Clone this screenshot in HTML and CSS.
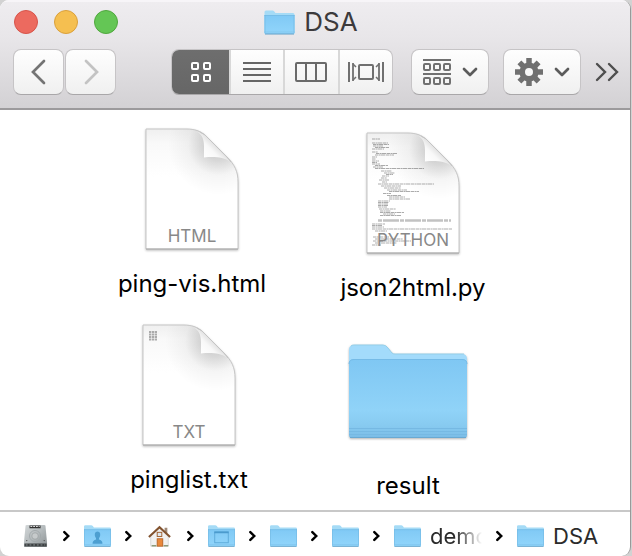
FILE: index.html
```html
<!DOCTYPE html>
<html lang="en">
<head>
<meta charset="utf-8">
<title>DSA</title>
<link rel="stylesheet" href="styles.css">
</head>
<body>
<svg class="defs" aria-hidden="true">
  <defs>
    <linearGradient id="g-front" x1="0" y1="0" x2="0" y2="1">
      <stop offset="0" stop-color="#7fc7f3"/><stop offset=".65" stop-color="#90d3f8"/><stop offset=".85" stop-color="#87caf0"/><stop offset="1" stop-color="#7abce6"/>
    </linearGradient>
    <linearGradient id="g-small" x1="0" y1="0" x2="0" y2="1">
      <stop offset="0" stop-color="#80c9f5"/><stop offset="1" stop-color="#91d5fb"/>
    </linearGradient>
    <linearGradient id="g-page" x1="0" y1="0" x2="0" y2="1">
      <stop offset="0" stop-color="#efefef"/><stop offset=".12" stop-color="#f9f9f9"/><stop offset=".4" stop-color="#fff"/>
    </linearGradient>
    <radialGradient id="g-curl" gradientUnits="userSpaceOnUse" cx="72" cy="16" r="50">
      <stop offset="0" stop-color="#000" stop-opacity=".22"/><stop offset=".3" stop-color="#000" stop-opacity=".15"/><stop offset=".6" stop-color="#000" stop-opacity=".04"/><stop offset="1" stop-color="#000" stop-opacity="0"/>
    </radialGradient>
    <linearGradient id="g-flap" gradientUnits="userSpaceOnUse" x1="59" y1="30" x2="72" y2="17">
      <stop offset="0" stop-color="#fff"/><stop offset=".6" stop-color="#f8f8f8"/><stop offset="1" stop-color="#dedede"/>
    </linearGradient>
    <linearGradient id="g-disk" x1="0" y1="0" x2="1" y2="1">
      <stop offset="0" stop-color="#d4d8d9"/><stop offset=".5" stop-color="#b4babc"/><stop offset="1" stop-color="#8b9193"/>
    </linearGradient>
    <symbol id="page" viewBox="-2 -2 97 126">
      <path d="M0 0H40C49 0 54 2 59 6L81 28C89 36 92 43 92 53V120H0Z" fill="url(#g-page)"/>
      <path d="M0 0H40C49 0 54 2 59 6L81 28C89 36 92 43 92 53V120H0Z" fill="url(#g-curl)"/>
      <path d="M0 0H40C49 0 54 2 59 6L81 28C89 36 92 43 92 53V120H0Z" fill="none" stroke="#c6c6c6" stroke-width="1"/>
      <path d="M50 2C56 5 58 10 58 17V28.500C69 27.500 77 28 85 33L59 6Z" fill="url(#g-flap)"/>
      <path d="M54 3L59 6L81 28L85 33" fill="none" stroke="#c4c4c4" stroke-width="1"/>
      <path d="M0 120H92" stroke="#a8a8a8" stroke-width="1"/>
    </symbol>
    <symbol id="folder" viewBox="0 0 30 25">
      <path d="M0 2Q0 .5 1.500 .5H8Q9 .5 9.800 1.500L11 3H28.500Q30 3 30 4.500V23Q30 24 29 24H1Q0 24 0 23Z" fill="#a5dbf6"/>
      <path d="M0 5H30V23Q30 24 29 24H1Q0 24 0 23Z" fill="url(#g-small)"/>
      <path d="M0 5.500H30M.5 5V23M29.500 5V23" stroke="#74b9e3" stroke-width=".7"/>
      <path d="M0 22H30" stroke="#7dbfe9" stroke-width=".6"/>
      <path d="M.5 24H29.500" stroke="#619fc7" stroke-width="1"/>
    </symbol>
    <symbol id="next" viewBox="0 0 8 12">
      <path d="M1.500 1.500L6 6L1.500 10.500" fill="none" stroke="#000" stroke-width="2.800" stroke-linecap="round"/>
    </symbol>
    <symbol id="down" viewBox="0 0 16 10">
      <path d="M2 2L8 8L14 2" fill="none" stroke="#5b5b5b" stroke-width="2.700" stroke-linecap="round" stroke-linejoin="round"/>
    </symbol>
  </defs>
</svg>

<div class="window">
  <header class="chrome">
    <div class="titlebar">
      <div class="lights">
        <button class="light light-close" aria-label="Close"></button>
        <button class="light light-min" aria-label="Minimize"></button>
        <button class="light light-zoom" aria-label="Zoom"></button>
      </div>
      <h1 class="title"><svg class="title-icon" aria-hidden="true"><use href="#folder"/></svg>DSA</h1>
    </div>
    <div class="toolbar">
      <div class="nav">
        <button class="tool nav-btn" aria-label="Back"><svg width="16" height="26" viewBox="0 0 16 26"><path d="M13 2L2 13L13 24" fill="none" stroke="#747474" stroke-width="2.700" stroke-linecap="round"/></svg></button>
        <button class="tool nav-btn" aria-label="Forward"><svg width="16" height="26" viewBox="0 0 16 26"><path d="M3 2L14 13L3 24" fill="none" stroke="#c3c3c3" stroke-width="2.700" stroke-linecap="round"/></svg></button>
      </div>
      <div class="views">
        <button class="view view-active" aria-label="Icons"><svg width="20" height="20" viewBox="0 0 20 20" fill="none" stroke="#fff" stroke-width="2"><rect x="1" y="1" width="6" height="6" rx="1"/><rect x="13" y="1" width="6" height="6" rx="1"/><rect x="1" y="13" width="6" height="6" rx="1"/><rect x="13" y="13" width="6" height="6" rx="1"/></svg></button>
        <button class="view" aria-label="List"><svg width="28" height="20" viewBox="0 0 28 20"><path d="M0 1H28M0 7H28M0 13H28M0 19H28" stroke="#666" stroke-width="2"/></svg></button>
        <button class="view" aria-label="Columns"><svg width="32" height="20" viewBox="0 0 32 20" fill="none" stroke="#6a6a6a" stroke-width="2"><rect x="1" y="1" width="30" height="18" rx="1"/><path d="M11 1V19M21 1V19"/></svg></button>
        <button class="view" aria-label="Cover flow"><svg width="36" height="20" viewBox="0 0 36 20" fill="none" stroke="#707070" stroke-width="2"><rect x="11" y="3" width="14" height="14" rx="1"/><path d="M1 0V20M35 0V20"/><path d="M5 1V19M31 1V19" stroke-width="1.800"/><path d="M5 2L8 5M5 18L8 15M31 2L28 5M31 18L28 15" stroke-width="1.500"/></svg></button>
      </div>
      <button class="tool menu" aria-label="Arrange"><svg width="28" height="26" viewBox="0 0 28 26" fill="none" stroke="#707070" stroke-width="2"><path d="M0 1H28M0 15H28"/><rect x="1" y="5" width="6" height="6" rx="1"/><rect x="11" y="5" width="6" height="6" rx="1"/><rect x="21" y="5" width="6" height="6" rx="1"/><rect x="1" y="19" width="6" height="6" rx="1"/><rect x="11" y="19" width="6" height="6" rx="1"/><rect x="21" y="19" width="6" height="6" rx="1"/></svg><svg class="down" aria-hidden="true"><use href="#down"/></svg></button>
      <button class="tool menu" aria-label="Action"><svg width="28" height="28" viewBox="-14 -14 28 28"><g stroke="#707070" stroke-width="5.500"><path d="M0 -14V-7M0 14V7M-14 0H-7M14 0H7"/><path d="M-9.600 -9.600L-5 -5M9.600 9.600L5 5M-9.600 9.600L-5 5M9.600 -9.600L5 -5"/></g><circle r="6.800" fill="none" stroke="#707070" stroke-width="5.600"/></svg><svg class="down" aria-hidden="true"><use href="#down"/></svg></button>
      <button class="more" aria-label="More"><svg width="24" height="20" viewBox="0 0 24 20"><path d="M2 2L10 10L2 18M14 2L22 10L14 18" fill="none" stroke="#4e4e4e" stroke-width="2.400" stroke-linecap="round"/></svg></button>
    </div>
  </header>

  <main class="canvas">
    <button class="item item-html">
      <span class="art"><svg class="page" aria-hidden="true"><use href="#page"/></svg><span class="kind">HTML</span></span>
      <span class="name">ping-vis.html</span>
    </button>
    <button class="item item-python">
      <span class="art"><svg class="page" aria-hidden="true"><use href="#page"/></svg>
        <svg class="page preview" viewBox="-2 -2 97 126" aria-hidden="true">
          <g fill="none" stroke="#555" stroke-width=".7" stroke-dasharray="3 .5 1.500 .4 5 .6" opacity=".7">
            <path d="M5 6H13M5 10H21M6 11.500H22M6 13H16M8 14.500H22M5 16H17M5 19H11M9 20.500H30M8 22H27M5 24H10M5 26H9M5 28H12M5 29.500H10M5 31H13M8 32.500H21M6 34H16M8 35.500H57M14 38H25M17 40H28M19 41.500H26M15 43H22M14 45H20M12 47H22M15 49H20M11 51H67M14 53H34M17 55H34M20 57H40M22 58.500H52M16 60.500H24M20 62.500H34M22 64H38M22 66H43M11 68H23M11 69.500H22M11 71H21M11 72.500H21M11 74H20M12 76H29M13 78H24M13 79.500H37M16 81H28M13 82.500H34M5 91H18M5 92.500H15M5 94H17M5 96H85M8 98H20M6 104H22M8 106H36M6 108H44M8 110H30M5 112H14"/>
          </g>
          <path d="M11 87.500H84" stroke="#c2c2c2" stroke-width="2.600" stroke-dasharray="4 1 16 1"/>
        </svg><span class="kind">PYTHON</span></span>
      <span class="name">json2html.py</span>
    </button>
    <button class="item item-txt">
      <span class="art"><svg class="page" aria-hidden="true"><use href="#page"/></svg>
        <svg class="page preview" viewBox="-2 -2 97 126" aria-hidden="true"><path d="M6 7H14M6 9.500H14M6 12H14M6 14.500H14" stroke="#aaa" stroke-width="1.800" stroke-dasharray="2.300 .6"/></svg>
        <span class="kind">TXT</span></span>
      <span class="name">pinglist.txt</span>
    </button>
    <button class="item item-folder">
      <span class="art"><svg class="big-folder" viewBox="0 0 120 96" aria-hidden="true">
        <path d="M1 6Q1 1 6 1H35Q38 1 40 4L44 9Q45 10 47 10H114Q119 10 119 15V90H1Z" fill="#a3dbfb"/>
        <path d="M3 2Q4 1 6 1H35Q38 1 40 4L44 9Q45 10 47 10H116" fill="none" stroke="#94cfe9" stroke-width="1"/>
        <path d="M1 20Q1 15 6 15H114Q119 15 119 20V91Q119 94 116 94H4Q1 94 1 91Z" fill="url(#g-front)"/>
        <path d="M1 20Q1 15.500 6 15.500H114Q119 15.500 119 20" fill="none" stroke="#75bbe7" stroke-width="1"/>
        <path d="M1 84.500H119M1 87.500H119M1 90.500H119" stroke="#76b9e3" stroke-width="1"/>
        <path d="M2 93.500H118" stroke="#69a9d2" stroke-width="1"/>
      </svg></span>
      <span class="name">result</span>
    </button>
  </main>

  <nav class="path" aria-label="Path">
    <a class="crumb" href="#" aria-label="Disk"><svg class="crumb-icon" viewBox="0 0 27 26"><path d="M4 1H23Q24 1 24.300 2L26 20V24Q26 25 25 25H2Q1 25 1 24V20L2.700 2Q3 1 4 1Z" fill="url(#g-disk)"/><path d="M1.500 21H25.500V24.500H1.500Z" fill="#3c4042"/><path d="M3 22.700H24" stroke="#8c9294" stroke-dasharray="2 2"/><path d="M7 3H19" stroke="#333" stroke-width="3"/><path d="M8 2.700H18" stroke="#eee" stroke-dasharray="2 1"/><circle cx="13" cy="13" r="6" fill="none" stroke="#a2a8aa"/><circle cx="13" cy="13" r="3.500" fill="#c6cacb" stroke="#8f9597" stroke-width=".6"/><circle cx="4" cy="18" r=".8" fill="#555"/><circle cx="23" cy="18" r=".8" fill="#555"/></svg></a>
    <svg class="next" aria-hidden="true"><use href="#next"/></svg>
    <a class="crumb" href="#" aria-label="Users"><svg class="crumb-icon" viewBox="0 0 30 25"><use href="#folder"/><path d="M9.500 21Q9.500 17.500 13.500 16.500L13.300 15Q11.500 12.500 12 10Q12.500 7.500 15 7.500Q17.500 7.500 18 10Q18.500 12.500 16.700 15L16.500 16.500Q20.500 17.500 20.500 21Z" fill="#4d9fd1"/></svg></a>
    <svg class="next" aria-hidden="true"><use href="#next"/></svg>
    <a class="crumb" href="#" aria-label="Home"><svg class="crumb-icon" viewBox="0 0 27 26"><path d="M19 4H22V10H19Z" fill="#a08a78"/><path d="M4 12L13.500 4L23 12V24H4Z" fill="#f1f1f0" stroke="#c9c9c9" stroke-width=".7"/><path d="M2 14L13.500 3.500L25 14" fill="none" stroke="#82532f" stroke-width="2.200"/><rect x="11" y="9" width="5" height="4.500" fill="#dfe8ed" stroke="#9e5b2a"/><rect x="11" y="16" width="6" height="8" fill="#e9883b" stroke="#b96526"/><path d="M5 23.500H10M18 23.500H23" stroke="#8e9a79" stroke-width="1.500"/></svg></a>
    <svg class="next" aria-hidden="true"><use href="#next"/></svg>
    <a class="crumb" href="#" aria-label="Desktop"><svg class="crumb-icon" viewBox="0 0 30 25"><use href="#folder"/><rect x="7.500" y="8" width="15" height="12" fill="none" stroke="#5ba8d8"/><path d="M7 8.500H23" stroke="#4b9bce" stroke-width="2"/></svg></a>
    <svg class="next" aria-hidden="true"><use href="#next"/></svg>
    <a class="crumb" href="#" aria-label="Folder"><svg class="crumb-icon"><use href="#folder"/></svg></a>
    <svg class="next" aria-hidden="true"><use href="#next"/></svg>
    <a class="crumb" href="#" aria-label="Folder"><svg class="crumb-icon"><use href="#folder"/></svg></a>
    <svg class="next" aria-hidden="true"><use href="#next"/></svg>
    <a class="crumb" href="#"><svg class="crumb-icon" aria-hidden="true"><use href="#folder"/></svg><span class="crumb-name crumb-faded">demo</span></a>
    <svg class="next" aria-hidden="true"><use href="#next"/></svg>
    <a class="crumb" href="#"><svg class="crumb-icon" aria-hidden="true"><use href="#folder"/></svg><span class="crumb-name">DSA</span></a>
  </nav>
</div>
</body>
</html>
```
FILE: styles.css
```css
* { box-sizing: border-box; }

body {
  margin: 0;
  background: #d2d2d2;
  font-family: Inter, "Liberation Sans", sans-serif;
  color: #000;
}

button {
  margin: 0;
  padding: 0;
  border: 0;
  background: none;
  font: inherit;
  color: inherit;
}

svg { display: block; flex: none; }

.defs { position: absolute; width: 0; height: 0; }

.window {
  display: flex;
  flex-direction: column;
  min-height: 100vh;
  margin-right: 1px;
  border-right: 1px solid #999;
  border-radius: 9px;
  background: #fff;
  overflow: hidden;
}

.chrome {
  padding: 0 11px 13px 13px;
  border-bottom: 2px solid #9c9a9c;
  background: linear-gradient(#efedf0, #e8e6e9 35%, #d3d1d4);
  box-shadow: inset 0 2px 0 #f7f5f8;
}

.titlebar {
  display: grid;
  grid-template-columns: 1fr auto 1fr;
  align-items: center;
  height: 44px;
  margin-bottom: 5px;
  padding-right: 10px;
}

.lights { display: flex; gap: 16px; padding-left: 1px; }

.light {
  width: 24px;
  height: 24px;
  border: 1px solid;
  border-radius: 50%;
}

.light-close { background: #ec6a5f; border-color: #d7544a; }
.light-min { background: #f5bf50; border-color: #daa03b; }
.light-zoom { background: #64c655; border-color: #50a73e; }

.title {
  display: flex;
  align-items: center;
  gap: 9px;
  margin: 0;
  font-size: 26px;
  line-height: 32px;
  font-weight: 400;
  color: #3c3a3c;
}

.title-icon { width: 31px; height: 25px; }

.toolbar { display: flex; align-items: center; gap: 14px; height: 46px; }

.nav { display: flex; gap: 1px; margin-right: auto; }

.tool {
  display: flex;
  align-items: center;
  justify-content: center;
  height: 46px;
  border: 1px solid #c6c4c6;
  border-bottom-color: #a9a7a9;
  border-radius: 8px;
  background: linear-gradient(#fefefe, #f0f0f0);
}

.nav-btn { width: 51px; }

.menu { gap: 11px; width: 78px; }

.down { width: 16px; height: 10px; }

.views {
  display: flex;
  width: 222px;
  height: 46px;
  margin-right: 4px;
  border: 1px solid #c6c4c6;
  border-bottom-color: #a9a7a9;
  border-radius: 8px;
  background: linear-gradient(#fefefe, #f0f0f0);
  overflow: hidden;
}

.view {
  display: flex;
  flex: 1;
  align-items: center;
  justify-content: center;
  border-left: 2px solid #d8d8d8;
}

.view-active {
  flex: none;
  width: 60px;
  margin: -1px -2px -1px -1px;
  border-left: 0;
  background: linear-gradient(#6e6e6e, #666);
}

.more { display: flex; justify-content: center; width: 24px; }

.canvas { position: relative; flex: 1; min-height: 400px; }

/* Icon view: every item sits where it was dropped. */
.item {
  position: absolute;
  display: flex;
  flex-direction: column;
  align-items: center;
  gap: 16px;
  width: 180px;
}

.item-html { left: 102px; top: 17px; }
.item-python { left: 323px; top: 21px; }
.item-txt { left: 99px; top: 213px; }
.item-folder { left: 318px; top: 219px; }

.art {
  position: relative;
  display: flex;
  flex-direction: column;
  align-items: center;
  justify-content: center;
  height: 126px;
}

.page { width: 97px; height: 126px; filter: drop-shadow(0 1px 1px rgba(0, 0, 0, .25)); }

.preview { position: absolute; inset: 0; filter: none; }

.kind {
  position: absolute;
  left: 0;
  right: 0;
  bottom: 6px;
  display: flex;
  justify-content: center;
  font-size: 17px;
  line-height: 22px;
  font-weight: 400;
  color: #888;
}

.big-folder { width: 120px; height: 96px; filter: drop-shadow(0 1px 1px rgba(0, 0, 0, .3)); }

.name { font-size: 24px; line-height: 30px; white-space: nowrap; }

.path {
  display: flex;
  align-items: center;
  gap: 14px;
  height: 46px;
  padding: 4px 20px 0 22px;
  border-top: 2px solid #c8c8c8;
}

.crumb {
  display: flex;
  align-items: center;
  gap: 9px;
  color: #2b2b2b;
  text-decoration: none;
}

.crumb-icon { width: 27px; height: 24px; }

.next { width: 7px; height: 12px; }

.crumb-name { font-size: 22px; line-height: 28px; }

.crumb-faded {
  width: 52px;
  overflow: hidden;
  mask-image: linear-gradient(to right, #000 50%, transparent);
}
```
